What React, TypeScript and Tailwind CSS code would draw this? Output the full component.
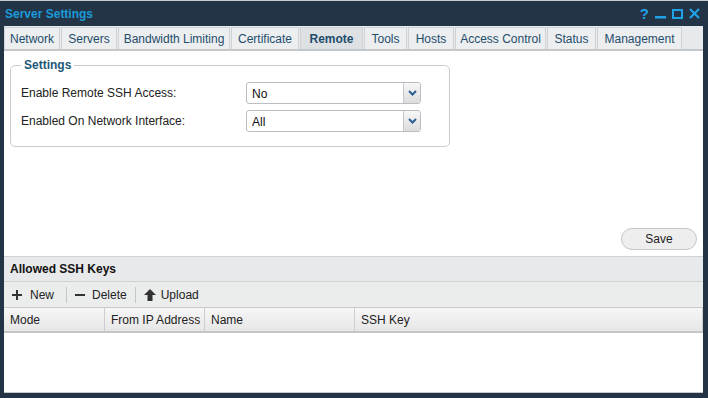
import React from "react";

const tabs = [
  { label: "Network", w: "w-[56px]" },
  { label: "Servers", w: "w-[56px]" },
  { label: "Bandwidth Limiting", w: "w-[112px]" },
  { label: "Certificate", w: "w-[68px]" },
  { label: "Remote", w: "w-[63px]", active: true },
  { label: "Tools", w: "w-[43px]" },
  { label: "Hosts", w: "w-[46px]" },
  { label: "Access Control", w: "w-[91px]" },
  { label: "Status", w: "w-[49px]" },
  { label: "Management", w: "w-[85px]" },
];

const columns = [
  { label: "Mode", w: "w-[101px]" },
  { label: "From IP Address", w: "w-[100px]" },
  { label: "Name", w: "w-[150px]" },
  { label: "SSH Key", w: "flex-1" },
];

const Chevron = () => (
  <svg width="9" height="6" viewBox="0 0 9 6">
    <path d="M1 1 L4.5 4.5 L8 1" stroke="#2b5d96" strokeWidth="2" fill="none" />
  </svg>
);

const SelectBox: React.FC<{ value: string }> = ({ value }) => (
  <div className="w-[175px] h-[22px] flex border border-[#b9bec4] rounded-[3px] bg-white overflow-hidden">
    <div className="flex-1 flex items-center pl-[5px] text-[12px] text-[#111] pt-[2px]">{value}</div>
    <div className="w-[17px] flex items-center justify-center border-l border-[#c4c8cc] bg-gradient-to-b from-[#f7f7f7] to-[#dcdcdc]">
      <Chevron />
    </div>
  </div>
);

const App: React.FC = () => {
  return (
    <div
      className="w-[708px] h-[398px] bg-[#243447] pl-[4px] pr-[5px] pb-[5px] flex flex-col border-t border-[#c5ccd3]"
      style={{ fontFamily: "Tahoma, 'Liberation Sans', Arial, sans-serif" }}
    >
      {/* title bar */}
      <div className="h-[25px] flex items-center justify-between pl-[1px] pr-[3px]">
        <span className="text-[12px] font-bold text-[#1a9ad8]">Server Settings</span>
        <div className="flex items-center gap-[6px] text-[#20a3e6]">
          <span className="text-[15px] font-bold leading-none">?</span>
          <svg width="11" height="12" viewBox="0 0 11 12">
            <rect x="0" y="8" width="11" height="2.5" fill="#20a3e6" />
          </svg>
          <svg width="11" height="12" viewBox="0 0 11 12">
            <rect x="1" y="2" width="9" height="8" stroke="#20a3e6" strokeWidth="2" fill="none" />
          </svg>
          <svg width="11" height="12" viewBox="0 0 11 12">
            <path d="M1 1 L10 10 M10 1 L1 10" stroke="#20a3e6" strokeWidth="2.2" />
          </svg>
        </div>
      </div>

      <div className="flex-1 flex flex-col bg-white">
        {/* tabs */}
        <div className="h-[25px] flex items-end gap-[1px] bg-[#e7eaec] border-b-2 border-[#c4c8cb]">
          {tabs.map((t) => (
            <div
              key={t.label}
              className={`${t.w} h-[22px] flex items-center justify-center text-[12px] text-[#1f4d6b] border border-b-0 border-[#cfd3d6] ${
                t.active ? "bg-[#dde1e4] font-bold" : "bg-[#eceef0]"
              }`}
            >
              {t.label}
            </div>
          ))}
        </div>

        {/* settings body */}
        <div className="h-[205px] flex flex-col px-[6px] pt-[5px] pb-[6px]">
          <fieldset className="w-[440px] h-[91px] border border-[#c8ccd1] rounded-[5px] pl-[10px] pt-[8px]">
            <legend className="text-[12px] font-bold text-[#1d5777] px-[3px]">Settings</legend>
            <div className="flex items-center h-[22px]">
              <span className="w-[225px] text-[12px] text-[#222]">Enable Remote SSH Access:</span>
              <SelectBox value="No" />
            </div>
            <div className="flex items-center h-[22px] mt-[6px]">
              <span className="w-[225px] text-[12px] text-[#222]">Enabled On Network Interface:</span>
              <SelectBox value="All" />
            </div>
          </fieldset>
          <div className="flex-1" />
          <div className="flex justify-end">
            <button className="w-[76px] h-[22px] rounded-full border border-[#c3c6c9] bg-[#eeeeee] text-[12px] text-[#222]">
              Save
            </button>
          </div>
        </div>

        {/* allowed ssh keys */}
        <div className="h-[26px] flex items-center pl-[6px] bg-[#e8e9ea] border-t border-b border-[#cfd1d3]">
          <span className="text-[12px] font-bold text-[#111]">Allowed SSH Keys</span>
        </div>
        <div className="h-[26px] flex items-center pl-[8px] bg-[#ebecec] border-b border-[#c8cacc] text-[12px] text-[#222]">
          <div className="flex items-center gap-[8px] pr-[12px]">
            <svg width="10" height="10" viewBox="0 0 10 10">
              <path d="M5 0 V10 M0 5 H10" stroke="#333" strokeWidth="2" />
            </svg>
            <span>New</span>
          </div>
          <div className="w-px h-[16px] bg-[#c4c6c8]" />
          <div className="flex items-center gap-[7px] px-[8px]">
            <svg width="10" height="10" viewBox="0 0 10 10">
              <path d="M0 5 H10" stroke="#333" strokeWidth="2" />
            </svg>
            <span>Delete</span>
          </div>
          <div className="w-px h-[16px] bg-[#c4c6c8]" />
          <div className="flex items-center gap-[5px] pl-[8px]">
            <svg width="12" height="12" viewBox="0 0 12 12">
              <path d="M6 0 L12 6 H8.5 V12 H3.5 V6 H0 Z" fill="#333" />
            </svg>
            <span>Upload</span>
          </div>
        </div>
        <div className="h-[25px] flex bg-gradient-to-b from-[#f6f6f6] to-[#e7e7e7] border-b-2 border-[#c6c6c6]">
          {columns.map((c) => (
            <div
              key={c.label}
              className={`${c.w} flex items-center pl-[6px] text-[12px] text-[#222] border-r border-[#cdcdcd]`}
            >
              {c.label}
            </div>
          ))}
        </div>
        <div className="flex-1 bg-white border-b border-[#c8c8c8]" />
      </div>
    </div>
  );
};

export default App;
